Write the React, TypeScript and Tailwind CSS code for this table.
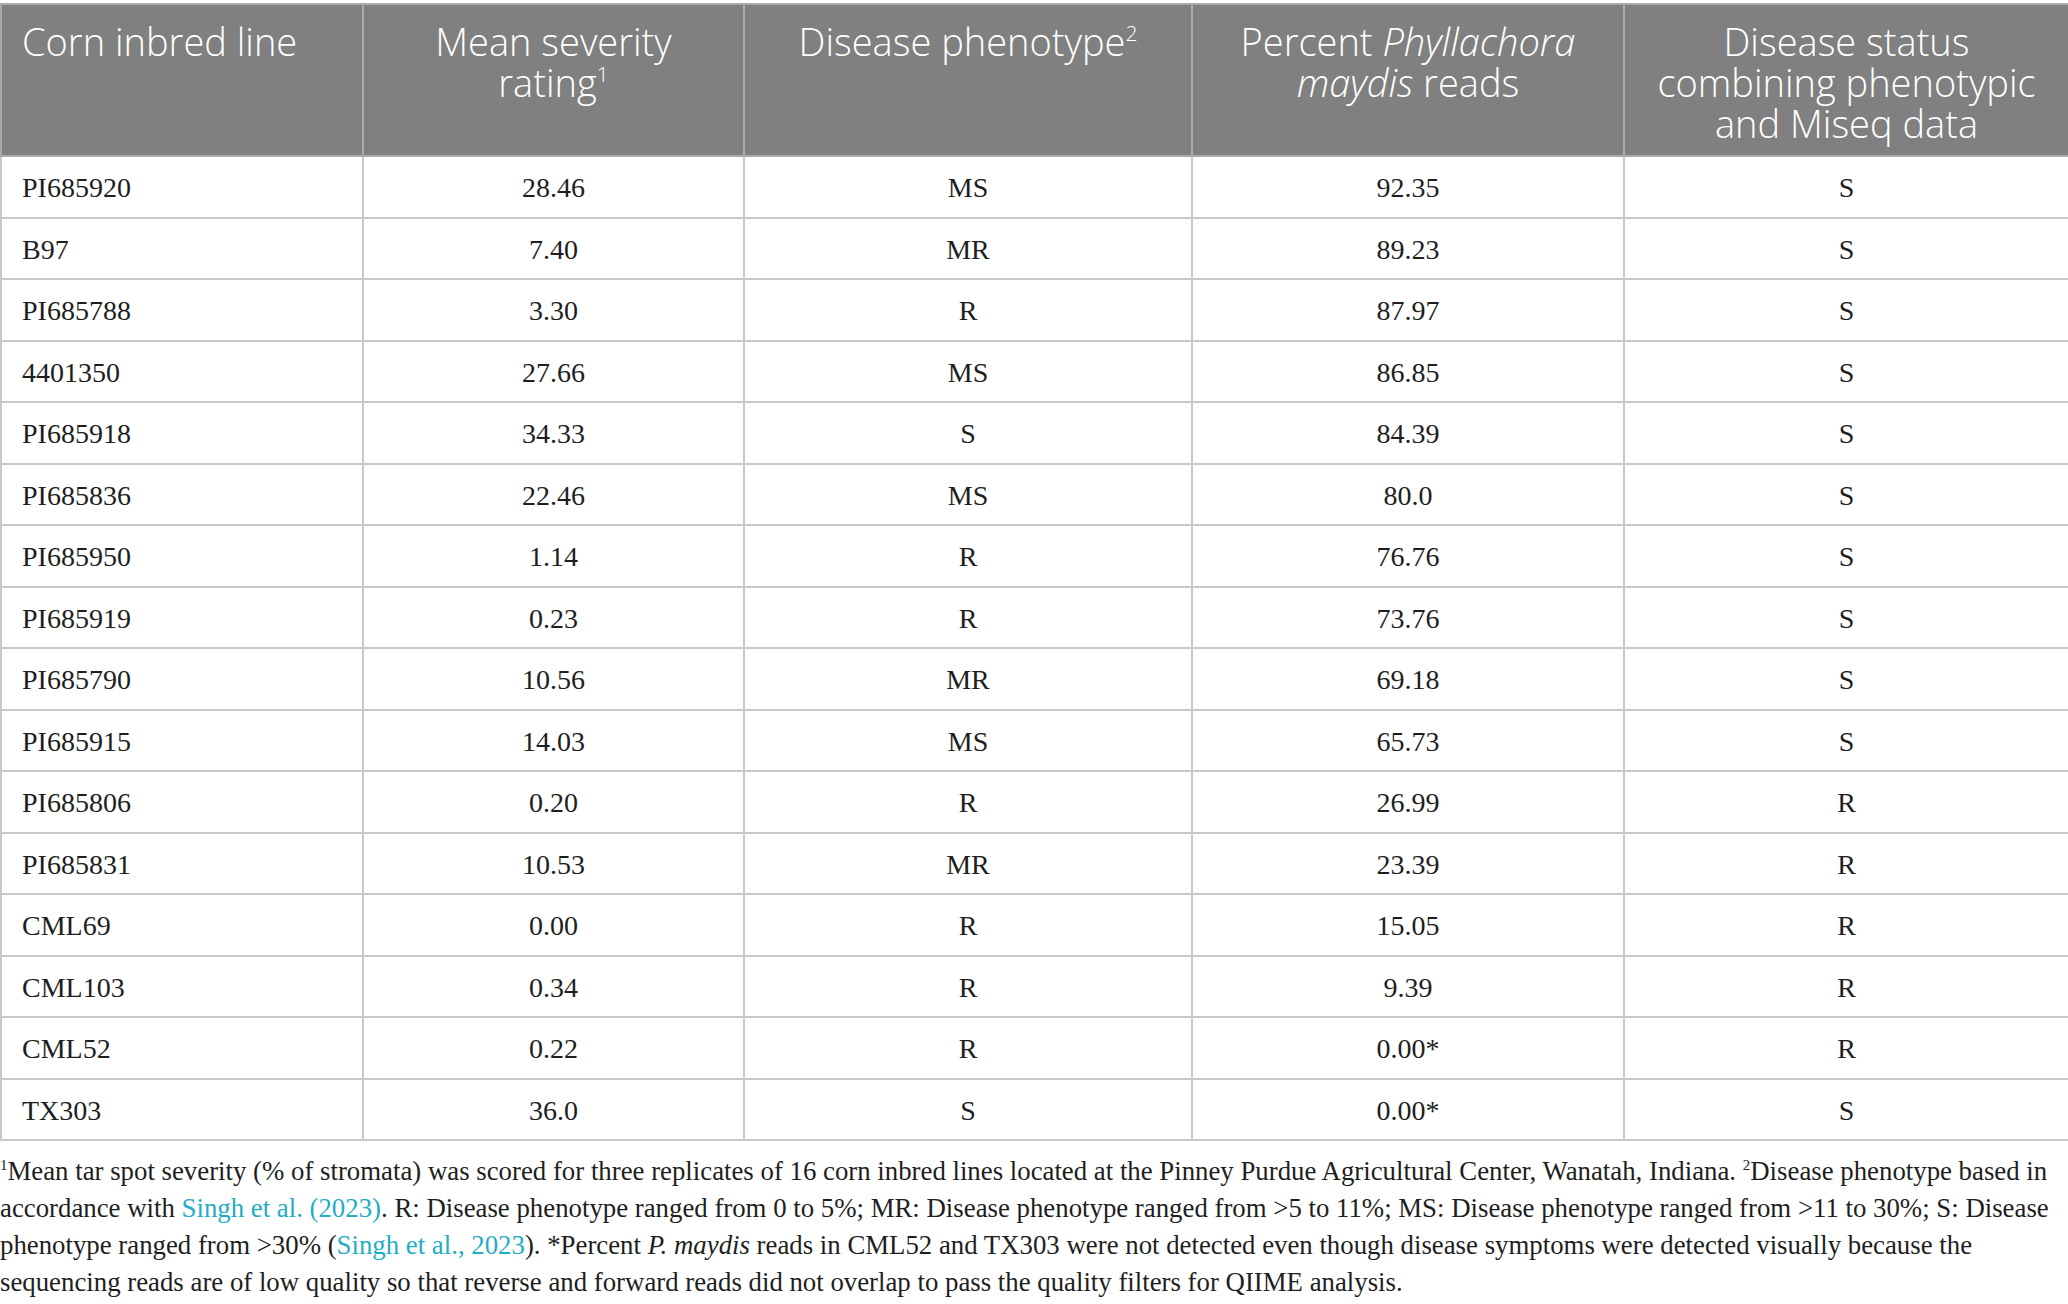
import React from "react";

const rows: [string, string, string, string, string][] = [
  ["PI685920", "28.46", "MS", "92.35", "S"],
  ["B97", "7.40", "MR", "89.23", "S"],
  ["PI685788", "3.30", "R", "87.97", "S"],
  ["4401350", "27.66", "MS", "86.85", "S"],
  ["PI685918", "34.33", "S", "84.39", "S"],
  ["PI685836", "22.46", "MS", "80.0", "S"],
  ["PI685950", "1.14", "R", "76.76", "S"],
  ["PI685919", "0.23", "R", "73.76", "S"],
  ["PI685790", "10.56", "MR", "69.18", "S"],
  ["PI685915", "14.03", "MS", "65.73", "S"],
  ["PI685806", "0.20", "R", "26.99", "R"],
  ["PI685831", "10.53", "MR", "23.39", "R"],
  ["CML69", "0.00", "R", "15.05", "R"],
  ["CML103", "0.34", "R", "9.39", "R"],
  ["CML52", "0.22", "R", "0.00*", "R"],
  ["TX303", "36.0", "S", "0.00*", "S"],
];

const thBase =
  "align-top pt-[16px] px-[14px] font-light text-[38px] leading-[41px] text-white border-2 border-[#a9aaa9] bg-[#7f807f]";
const tdBase =
  "h-[61.5px] pt-[3px] border-2 border-[#c8c8c8] text-[28px] text-[#1e1e1e] align-middle";

function Sup({ n }: { n: string }) {
  return <sup className="text-[21px] relative -top-[15px] font-light">{n}</sup>;
}

function FSup({ n }: { n: string }) {
  return <sup className="text-[15px] relative -top-[10px]">{n}</sup>;
}

export default function App() {
  return (
    <div className="w-[2068px] h-[1304px] bg-white pt-[3px] overflow-hidden">
      <table
        className="table-fixed border-collapse w-[2068px]"
        style={{ fontFamily: '"Liberation Serif", "Times New Roman", serif' }}
      >
        <colgroup>
          <col className="w-[362px]" />
          <col className="w-[381px]" />
          <col className="w-[448px]" />
          <col className="w-[432px]" />
          <col className="w-[445px]" />
        </colgroup>
        <thead style={{ fontFamily: '"Open Sans", "Noto Sans", sans-serif' }}>
          <tr className="h-[152px]">
            <th className={`${thBase} text-left pl-[20px]`}>Corn inbred line</th>
            <th className={`${thBase} text-center`}>
              Mean severity
              <br />
              rating
              <Sup n="1" />
            </th>
            <th className={`${thBase} text-center`}>
              Disease phenotype
              <Sup n="2" />
            </th>
            <th className={`${thBase} text-center`}>
              Percent <i>Phyllachora</i>
              <br />
              <i>maydis</i> reads
            </th>
            <th className={`${thBase} text-center`}>
              Disease status
              <br />
              combining phenotypic
              <br />
              and Miseq data
            </th>
          </tr>
        </thead>
        <tbody>
          {rows.map((r) => (
            <tr key={r[0]}>
              <td className={`${tdBase} text-left pl-[20px]`}>{r[0]}</td>
              <td className={`${tdBase} text-center`}>{r[1]}</td>
              <td className={`${tdBase} text-center`}>{r[2]}</td>
              <td className={`${tdBase} text-center`}>{r[3]}</td>
              <td className={`${tdBase} text-center`}>{r[4]}</td>
            </tr>
          ))}
        </tbody>
      </table>
      <div
        className="pt-[12px] text-[26.8px] leading-[37px] text-[#1e1e1e]"
        style={{ fontFamily: '"Liberation Serif", "Times New Roman", serif' }}
      >
        <div className="whitespace-nowrap">
          <FSup n="1" />
          Mean tar spot severity (% of stromata) was scored for three replicates of 16 corn inbred lines located at the
          Pinney Purdue Agricultural Center, Wanatah, Indiana. <FSup n="2" />
          Disease phenotype based in
        </div>
        <div className="whitespace-nowrap">
          accordance with <span className="text-[#1fadc6]">Singh et al. (2023)</span>. R: Disease phenotype ranged
          from 0 to 5%; MR: Disease phenotype ranged from &gt;5 to 11%; MS: Disease phenotype ranged from &gt;11 to
          30%; S: Disease
        </div>
        <div className="whitespace-nowrap">
          phenotype ranged from &gt;30% (<span className="text-[#1fadc6]">Singh et al., 2023</span>). *Percent{" "}
          <i>P. maydis</i> reads in CML52 and TX303 were not detected even though disease symptoms were detected
          visually because the
        </div>
        <div className="whitespace-nowrap">
          sequencing reads are of low quality so that reverse and forward reads did not overlap to pass the quality
          filters for QIIME analysis.
        </div>
      </div>
    </div>
  );
}
